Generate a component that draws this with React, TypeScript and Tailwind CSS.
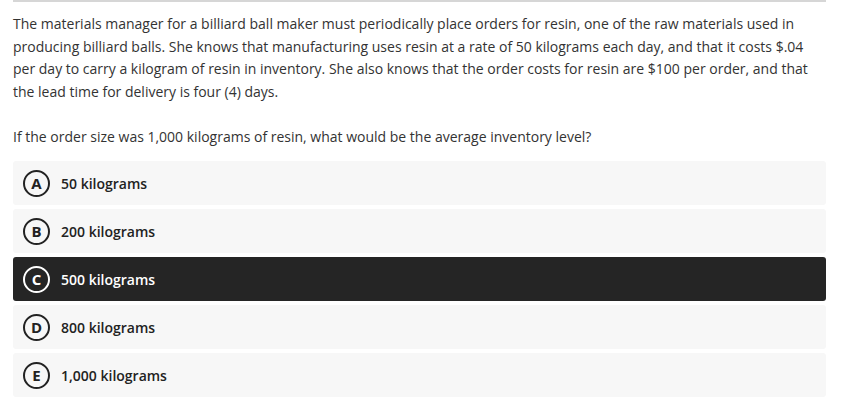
import { useState } from 'react';

const options = [
  { key: 'A', label: '50 kilograms' },
  { key: 'B', label: '200 kilograms' },
  { key: 'C', label: '500 kilograms' },
  { key: 'D', label: '800 kilograms' },
  { key: 'E', label: '1,000 kilograms' },
];

export default function App() {
  const [selected, setSelected] = useState('C');

  return (
    <div className="w-[848px] h-[412px] bg-white font-['Open_Sans',sans-serif] text-[#333]">
      <div className="ml-[13px] w-[813px] border-t-2 border-[#d6d6d6] pt-[11px]">
        <p className="text-[14px] leading-[22.5px]">
          The materials manager for a billiard ball maker must periodically place orders for resin, one of the raw
          materials used in producing billiard balls. She knows that manufacturing uses resin at a rate of 50 kilograms
          each day, and that it costs $.04 per day to carry a kilogram of resin in inventory. She also knows that the
          order costs for resin are $100 per order, and that the lead time for delivery is four (4) days.
        </p>
        <p className="mt-[23px] text-[14px] leading-[22px]">
          If the order size was 1,000 kilograms of resin, what would be the average inventory level?
        </p>
        <div className="mt-[13px] flex flex-col gap-[4px]">
          {options.map((o) => {
            const active = selected === o.key;
            return (
              <div
                key={o.key}
                onClick={() => setSelected(o.key)}
                className={active
                  ? 'flex h-[44px] cursor-pointer items-center rounded-[3px] bg-[#252525] pl-[10px] text-white'
                  : 'flex h-[44px] cursor-pointer items-center rounded-[3px] bg-[#f7f7f7] pl-[10px] text-[#222]'}
              >
                <div
                  className={active
                    ? 'flex h-[27px] w-[27px] shrink-0 items-center justify-center rounded-full border-2 border-white text-[15px] font-bold'
                    : 'flex h-[27px] w-[27px] shrink-0 items-center justify-center rounded-full border-2 border-[#222] text-[15px] font-bold'}
                >
                  {o.key}
                </div>
                <div className="ml-[11px] text-[14px] font-semibold">{o.label}</div>
              </div>
            );
          })}
        </div>
      </div>
    </div>
  );
}
